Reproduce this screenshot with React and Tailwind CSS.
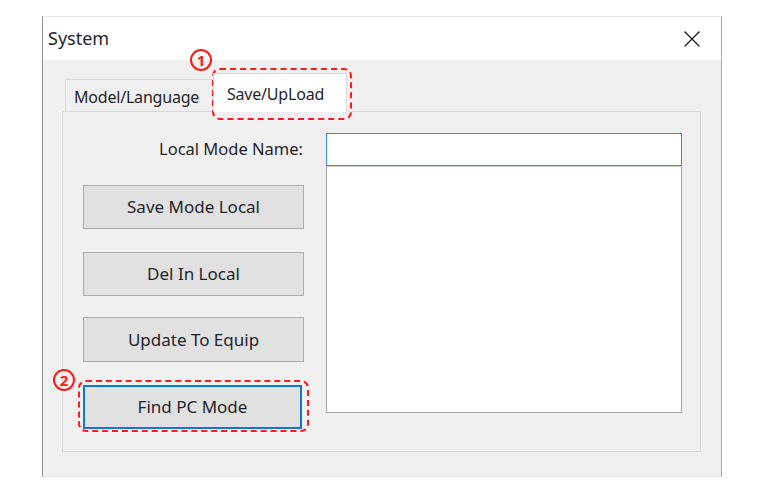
import React from "react";

const BUTTONS = [
  { label: "Save Mode Local", mt: "mt-[20px]", h: "h-[44px]" },
  { label: "Del In Local", mt: "mt-[23px]", h: "h-[44px]" },
  { label: "Update To Equip", mt: "mt-[21px]", h: "h-[45px]" },
];

function CloseIcon() {
  return (
    <svg width="18" height="18" viewBox="0 0 18 18" fill="none" stroke="#1a1a1a" strokeWidth="1.3">
      <path d="M1.5 1.5 L16.5 16.5 M16.5 1.5 L1.5 16.5" />
    </svg>
  );
}

function Marker({ n, className }) {
  return (
    <div className={`absolute w-[22px] h-[22px] rounded-full border-2 border-[#ff1a1a] flex items-center justify-center text-[15px] font-bold leading-none text-[#ff1a1a] ${className}`}>
      {n}
    </div>
  );
}

export default function App() {
  return (
    <div
      className="relative w-[768px] h-[493px] bg-white pt-[16px] pl-[42px] text-[#1f1f2a]"
      style={{ fontFamily: '"Noto Sans", "Open Sans", sans-serif' }}
    >
      {/* dialog window */}
      <div className="w-[680px] h-[461px] flex flex-col bg-[#f0f0f0] border-l border-l-[#8c8c8c] border-r border-r-[#a5a5a5] border-t border-t-[#e3e3e3] border-b border-b-[#e3e3e3]">
        <div className="h-[43px] bg-white flex items-center justify-between pl-[5px] pr-[20px]">
          <span className="text-[18px]">System</span>
          <CloseIcon />
        </div>

        <div className="pl-[19px] pr-[20px] pt-[13px]">
          {/* tab strip */}
          <div className="flex items-end h-[38px] pl-[3px]">
            <div className="h-[32px] w-[148px] border border-[#d9d9d9] border-b-0 bg-[#f0f0f0] flex items-center pl-[8px] pt-[3px] text-[16px] tracking-[-0.2px]">
              Model/Language
            </div>
            <div className="relative z-10 -mb-px h-[39px] w-[134px] border border-[#d9d9d9] border-b-0 bg-white flex items-center pl-[13px] pt-[2px] text-[16px] tracking-[-0.2px]">
              Save/UpLoad
            </div>
          </div>

          {/* tab page */}
          <div className="h-[341px] border border-[#d9d9d9] flex pl-[20px] pt-[21px]">
            <div className="w-[221px] flex flex-col">
              <div className="h-[32px] flex items-center justify-end pr-[1px] text-[16.5px]">Local Mode Name:</div>
              {BUTTONS.map((b) => (
                <button
                  key={b.label}
                  className={`${b.mt} ${b.h} w-full bg-[#e1e1e1] border border-[#adadad] text-[17px] text-[#1f1f2a]`}
                >
                  {b.label}
                </button>
              ))}
              <button className="mt-[23px] h-[44px] w-[219px] bg-[#e1e1e1] border-2 border-[#0a78d7] text-[17px] text-[#1f1f2a]">
                Find PC Mode
              </button>
            </div>

            <div className="ml-[22px] w-[356px] flex flex-col">
              <div className="h-[33px] bg-white border border-[#3c8ad8]" />
              <div className="h-[247px] bg-white border border-[#a3a3a3] border-t-[#cfcfcf]" />
            </div>
          </div>
        </div>
      </div>

      {/* callouts */}
      <div className="absolute left-[212px] top-[68px] w-[140px] h-[52px] rounded-[8px] border-2 border-dashed border-[#ff1a1a]" />
      <Marker n="1" className="left-[190px] top-[49px]" />
      <div className="absolute left-[78px] top-[380px] w-[231px] h-[52px] rounded-[8px] border-2 border-dashed border-[#ff1a1a]" />
      <Marker n="2" className="left-[53px] top-[369px]" />
    </div>
  );
}
